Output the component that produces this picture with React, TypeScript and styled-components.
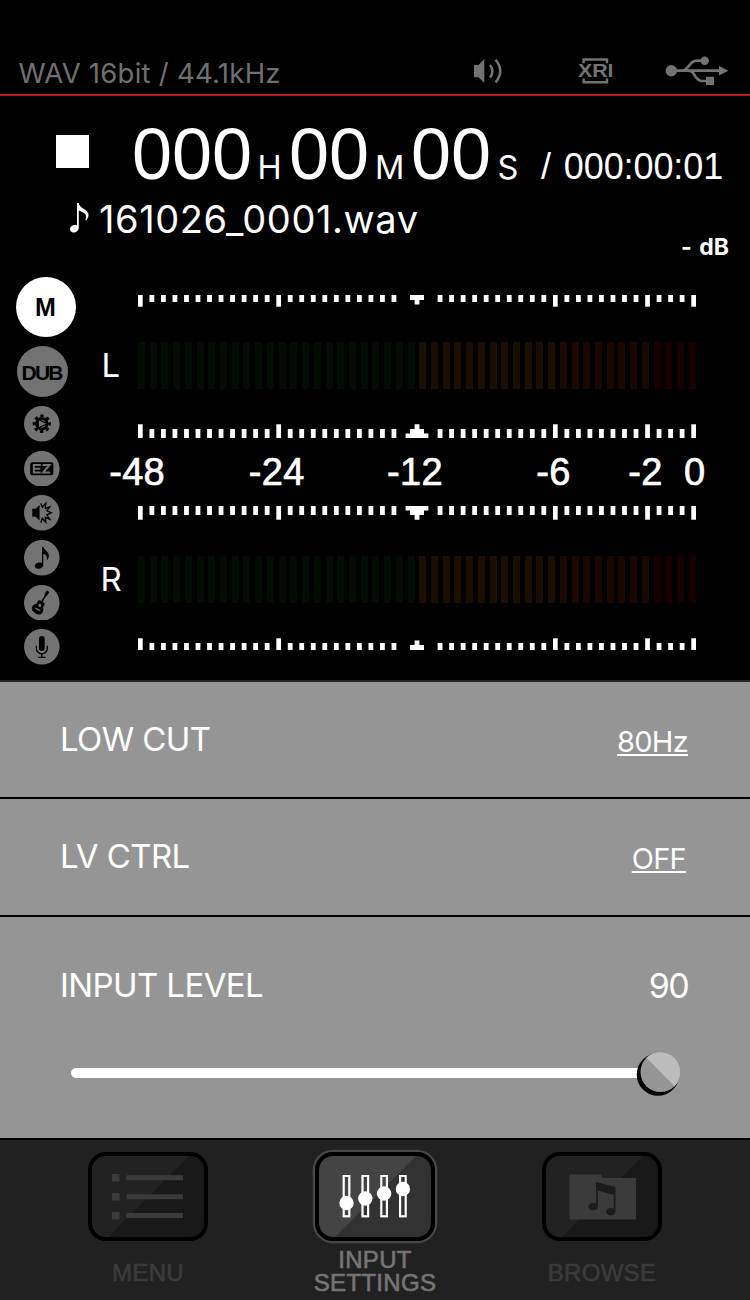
import React from "react";
import styled, { createGlobalStyle } from "styled-components";

const GlobalStyle = createGlobalStyle`
  * { box-sizing: border-box; }
  body { margin: 0; background: #000; }
`;

const system = `Inter, "Open Sans", sans-serif`;
const helvetica = `"Liberation Sans", Arial, sans-serif`;

const Screen = styled.main`
  width: 750px;
  height: 1300px;
  display: flex;
  flex-direction: column;
  overflow: hidden;
  background: #000;
  color: #fff;
  font-family: ${system};
`;

/* Status bar */
const StatusBar = styled.header`
  height: 96px;
  flex: none;
  display: flex;
  align-items: flex-end;
  border-bottom: 2px solid #b81c18;
  color: #707070;
`;
const Format = styled.div`
  width: 455px;
  padding: 0 0 4px 18.5px;
  font-size: 27.5px;
  line-height: 33px;
  font-weight: 400;
  letter-spacing: 0.25px;
  white-space: nowrap;
`;
const StatusIcon = styled.svg<{ $w: number; $h: number; $left: number; $bottom: number }>`
  flex: none;
  width: ${(p) => p.$w}px;
  height: ${(p) => p.$h}px;
  margin: 0 0 ${(p) => p.$bottom}px ${(p) => p.$left}px;
`;

/* Transport */
const Transport = styled.section`
  height: 174px;
  flex: none;
  display: flex;
  flex-direction: column;
`;
const TimeRow = styled.div`
  height: 102px;
  display: flex;
  align-items: baseline;
  padding-left: 56px;
  white-space: nowrap;
`;
const StopMark = styled.div`
  width: 33px;
  height: 33px;
  flex: none;
  align-self: flex-start;
  margin: 39px 43px 0 0;
  background: #fff;
`;
const Digits = styled.span<{ $width: number }>`
  width: ${(p) => p.$width}px;
  flex: none;
  font: 72px/104px ${helvetica};
  padding-top: 6px;
`;
const Unit = styled.span<{ $left: number; $width: number }>`
  flex: none;
  width: ${(p) => p.$width}px;
  padding-left: ${(p) => p.$left}px;
  font-size: 32.5px;
  font-weight: 400;
`;
const Total = styled.span`
  flex: none;
  font: 36px/40px ${helvetica};
  letter-spacing: -0.1px;
  word-spacing: 3px;
`;
const FileRow = styled.div`
  display: flex;
  align-items: center;
  height: 40px;
  padding-left: 69px;
`;
const FileName = styled.span`
  margin: 2px 0 0 9px;
  font-size: 38px;
  line-height: 46px;
  font-weight: 400;
  letter-spacing: 0.6px;
  white-space: nowrap;
`;
const Peak = styled.div`
  padding-right: 21px;
  margin-top: -5px;
  text-align: right;
  font-size: 23px;
  line-height: 28px;
  font-weight: 700;
  word-spacing: 2px;
`;

/* Meters */
const MeterArea = styled.section`
  height: 410px;
  flex: none;
  display: flex;
`;
const Effects = styled.nav`
  width: 94px;
  display: flex;
  flex-direction: column;
  align-items: center;
  padding: 7px 9.5px 0 0;
`;
const MasterBadge = styled.div`
  width: 60px;
  height: 60px;
  margin-left: 6.5px;
  border-radius: 50%;
  display: grid;
  place-items: center;
  background: #fff;
  color: #000;
  font: 700 25px/60px ${helvetica};
`;
const DubBadge = styled.div`
  width: 51.4px;
  height: 51.4px;
  margin-top: 8.7px;
  border-radius: 50%;
  display: grid;
  place-items: center;
  background: #737373;
  color: #000;
  font: 700 21px/53px ${helvetica};
  letter-spacing: -1.8px;
  text-indent: -1.2px;
`;
const EffectIcon = styled.svg`
  width: 35.6px;
  height: 35.6px;
  flex: none;
  margin-top: 9.02px;
`;
const Meters = styled.div`
  flex: 1;
  display: flex;
  flex-direction: column;
  padding-top: 25px;
`;
const Channel = styled.div<{ $gapTop: number; $gapBottom: number }>`
  display: flex;
  align-items: center;
  height: 47px;
  margin: ${(p) => p.$gapTop}px 0 ${(p) => p.$gapBottom}px;
`;
const ChannelName = styled.span<{ $left: number }>`
  width: 44px;
  padding-left: ${(p) => p.$left}px;
  font-size: 33px;
  line-height: 47px;
  font-weight: 400;
`;
const Bars = styled.div`
  width: 558px;
  height: 47px;
  display: flex;
  justify-content: space-between;
`;
const Bar = styled.i<{ $color: string }>`
  width: 7px;
  background: ${(p) => p.$color};
`;
const Ruler = styled.svg`
  display: block;
  width: 558px;
  height: 14px;
  margin-left: 44px;
  flex: none;
`;
const Scale = styled.div`
  position: relative;
  height: 68px;
`;
const ScaleValue = styled.span<{ $x: number }>`
  position: absolute;
  top: 12px;
  left: ${(p) => p.$x}px;
  font: 38px/44px ${helvetica};
  letter-spacing: 0.3px;
  -webkit-text-stroke: 0.7px #fff;
`;

/* Settings */
const Settings = styled.section`
  height: 460px;
  flex: none;
  display: flex;
  flex-direction: column;
  border-top: 2px solid #262626;
  border-bottom: 2px solid #000;
  background: #959595;
`;
const Row = styled.div<{ $height: number; $line?: boolean; $top: number }>`
  display: flex;
  justify-content: space-between;
  align-items: baseline;
  height: ${(p) => p.$height}px;
  padding: ${(p) => p.$top}px 62px 0 60px;
  border-bottom: ${(p) => (p.$line ? "2px solid #000" : "none")};
`;
const Label = styled.span`
  font-size: 33px;
  line-height: 42px;
  font-weight: 400;
  letter-spacing: -0.6px;
`;
const Choice = styled.span<{ $right?: number }>`
  position: relative;
  top: 1px;
  margin-right: ${(p) => p.$right ?? 0}px;
  font-size: 29px;
  font-weight: 400;
  letter-spacing: -0.7px;
  text-decoration: underline;
  text-decoration-thickness: 2px;
  text-underline-offset: 2px;
`;
const Level = styled.span`
  position: relative;
  top: 1px;
  font-size: 34px;
  font-weight: 400;
  letter-spacing: -1.6px;
`;
const SliderRow = styled.div`
  display: flex;
  align-items: center;
  height: 46px;
  margin-top: 21px;
  padding-left: 71px;
`;
const Track = styled.div`
  width: 575px;
  height: 10px;
  border-radius: 5px;
  background: #fff;
`;
const Knob = styled.svg`
  width: 46px;
  height: 46px;
  margin-left: -10px;
`;

/* Tabs */
const TabBar = styled.nav`
  flex: 1;
  display: grid;
  grid-template-columns: 245px 260px 245px;
  background: #212121;
`;
const Tab = styled.div<{ $inset?: string; $color: string }>`
  display: flex;
  flex-direction: column;
  align-items: center;
  padding: ${(p) => p.$inset ?? "12px 0 0"};
  color: ${(p) => p.$color};
`;
const Key = styled.div<{ $active?: boolean }>`
  width: 120px;
  height: 89px;
  flex: none;
  display: grid;
  place-items: center;
  border: 4.5px solid #000;
  border-radius: 18px;
  background: ${(p) =>
    p.$active
      ? "linear-gradient(135deg, #444 50%, #323232 50.5%)"
      : "linear-gradient(135deg, #222 50%, #191919 50.5%)"};
  background-clip: padding-box;
  box-shadow: ${(p) => (p.$active ? "0 0 0 2.3px #484848" : "none")};
`;
const TabLabel = styled.div<{ $top: number }>`
  margin-top: ${(p) => p.$top}px;
  font: 24px/23px ${helvetica};
  letter-spacing: 0.3px;
  -webkit-text-stroke: 0.6px currentColor;
  text-align: center;
`;

const STEP = 553.3 / 48;
const MAJOR = [0, 12, 36, 44, 48];

function Ticks({ up, tall }: { up?: boolean; tall?: boolean }) {
  const minor = tall ? 9 : 7;
  const major = tall ? 13.7 : 11.7;
  const centre = tall
    ? "M267.6 0h22.800v4.600h-4.400v4.400h-4.600v4.700h-4.800v-4.700h-4.600V4.600h-4.400z"
    : "M272 0h14v5h-4.600v4.500h-4.800V5H272z";
  const marks = [];
  for (let i = 0; i <= 48; i++) {
    if (i >= 23 && i <= 25) continue;
    const big = MAJOR.includes(i);
    const w = big ? 4.7 : 4.8;
    marks.push(<rect key={i} x={2.35 + i * STEP - w / 2} y={0} width={w} height={big ? major : minor} />);
  }
  return (
    <Ruler viewBox="0 0 558 14" fill="#fff">
      <g transform={up ? "matrix(1 0 0 -1 0 14)" : undefined}>
        {marks}
        <path d={centre} />
      </g>
    </Ruler>
  );
}

function barColor(i: number) {
  if (i < 24) return "#030d04";
  if (i < 36) return "#1a0f00";
  if (i < 44) return "#1b0800";
  return "#180000";
}

function LevelBars() {
  return (
    <Bars>
      {Array.from({ length: 48 }, (_, i) => (
        <Bar key={i} $color={barColor(i)} />
      ))}
    </Bars>
  );
}

const Disc = ({ children }: { children: React.ReactNode }) => (
  <EffectIcon viewBox="-17.8 -17.8 35.6 35.6">
    <circle r="17.8" fill="#737373" />
    {children}
  </EffectIcon>
);

export default function App() {
  return (
    <Screen>
      <GlobalStyle />
      <StatusBar>
        <Format>WAV 16bit / 44.1kHz</Format>
        <StatusIcon $w={29} $h={24} $left={19} $bottom={11} viewBox="0 0 29 24" fill="#737373">
          <path d="M0 6h4.500L10.300 0v24L4.500 18.300H0z" />
          <g fill="none" stroke="#737373" strokeWidth="2.5">
            <path d="M16 6q5 6.200 0 12.400" />
            <path d="M21.500 .8q9.500 11.200 0 22.600" />
          </g>
        </StatusIcon>
        <StatusIcon $w={36} $h={26} $left={75} $bottom={10} viewBox="0 0 36 26" fill="#737373">
          <path d="M5.600 5.300V1.500H29v3.800M5.600 20.500v3.800H29v-3.800" fill="none" stroke="#737373" strokeWidth="2.400" />
          <text
            x="0"
            y="19.200"
            fontFamily="Liberation Sans, sans-serif"
            fontWeight="700"
            fontSize="18.500"
            textLength="35.500"
            lengthAdjust="spacingAndGlyphs"
          >
            XRI
          </text>
        </StatusIcon>
        <StatusIcon $w={64} $h={30} $left={51} $bottom={8} viewBox="0 0 64 30" fill="#737373">
          <circle cx="6.3" cy="14.7" r="5.7" />
          <circle cx="39.7" cy="4.7" r="4.2" />
          <path d="M54 9.700l9.300 5-9.300 4.900zM41 20.700h8v8.300h-8z" />
          <path
            d="M6 14.700h49M16 14.700c4.500 0 5.500-2 8-5s4-5 8-5h6M24 14.700c4 0 4 2.500 6 5.300s4 5 7 5h6"
            fill="none"
            stroke="#737373"
            strokeWidth="2.7"
          />
        </StatusIcon>
      </StatusBar>

      <Transport>
        <TimeRow>
          <StopMark />
          <Digits $width={120}>000</Digits>
          <Unit $left={5.5} $width={37}>H</Unit>
          <Digits $width={80}>00</Digits>
          <Unit $left={6} $width={42}>M</Unit>
          <Digits $width={80}>00</Digits>
          <Unit $left={6.5} $width={50}>S</Unit>
          <Total>/ 000:00:01</Total>
        </TimeRow>
        <FileRow>
          <svg width="21" height="32" viewBox="0 0 21 32" fill="#fff">
            <path d="M8 1h1.800c.5 3.500 3 4.500 6 6.500 4.500 3 4.800 6.500 1.500 11l-1-.5c2-4 1-7-6.500-9.500V25c0 3.500-2.500 5.500-5.300 5.500C2.300 30.500 1 29 1 27.200c0-2.400 2.300-4.200 5-4.200.8 0 1.400.1 2 .4z" />
          </svg>
          <FileName>161026_0001.wav</FileName>
        </FileRow>
        <Peak>- dB</Peak>
      </Transport>

      <MeterArea>
        <Effects>
          <MasterBadge>M</MasterBadge>
          <DubBadge>DUB</DubBadge>
          <Disc>
            <circle r="7.600" fill="none" stroke="#000" strokeWidth="3.200" strokeDasharray="3.200 2.769" strokeDashoffset="1.600" />
            <circle r="5.300" fill="none" stroke="#000" strokeWidth="2.800" />
            <path d="M-3.500-4.300L5.500 0l-9 4.300z" fill="#737373" stroke="#000" strokeWidth="1.200" />
          </Disc>
          <Disc>
            <rect x="-11.600" y="-6.500" width="23.200" height="13" rx="2" />
            <path d="M-1-3.800h-7v7.600h7M-8 0h6.500M.8-3.800h7L1.200 3.800h7.200" fill="none" stroke="#737373" strokeWidth="2" />
          </Disc>
          <Disc>
            <path d="M-9.500-4h3.300l4-3.800v15.600l-4-3.800h-3.300z" />
            <path d="M-1-9.500l1.500 4 3.500-4-.5 5 4.500-1.500-3 4L9.500 0 5 2l3 4.500-4.500-2 .5 5L.5 5.500-1 10" fill="none" stroke="#000" strokeWidth="1.300" />
          </Disc>
          <Disc>
            <path d="M.2-11h1.300c.5 3 5.500 4.500 5.500 8.800 0 2-.7 3.700-2 5.200.8-4-.5-6-3.500-7V7C1.500 9.500-1 11-3.500 11S-7 9.700-7 8.300C-7 6-4.500 4.600-2 4.600c.8 0 1.600.1 2.200.4z" />
          </Disc>
          <Disc>
            <g transform="translate(-.5 0) rotate(30)">
              <rect x="-.8" y="-10" width="1.600" height="13" />
              <rect x="-1.500" y="-13.500" width="3" height="5" rx=".8" />
              <path d="M-2.500-1.500c-1.500.3-2 2.300-1 4.300-2 1.700-2.700 3.500-2.300 5.500C-5.300 11-3 12 0 12s5.300-1 5.800-3.700c.4-2-.3-3.800-2.300-5.500 1-2 .5-4-1-4.300z" />
              <circle cy="3" r="1.500" fill="#737373" />
              <path d="M-2.500 7.500h5" stroke="#737373" strokeWidth="1.400" />
            </g>
          </Disc>
          <Disc>
            <rect x="-2.900" y="-10.800" width="5.800" height="15" rx="2.900" />
            <path d="M-5.500-1v2.500a5.500 5.500 0 0 0 11 0V-1M0 7v3.300M-3.700 10.500h7.400" fill="none" stroke="#000" strokeWidth="1.300" />
          </Disc>
        </Effects>
        <Meters>
          <Ticks />
          <Channel $gapTop={33} $gapBottom={35}>
            <ChannelName $left={7.5}>L</ChannelName>
            <LevelBars />
          </Channel>
          <Ticks up tall />
          <Scale>
            <ScaleValue $x={15.2}>-48</ScaleValue>
            <ScaleValue $x={154.8}>-24</ScaleValue>
            <ScaleValue $x={293}>-12</ScaleValue>
            <ScaleValue $x={442.3}>-6</ScaleValue>
            <ScaleValue $x={534.3}>-2</ScaleValue>
            <ScaleValue $x={590}>0</ScaleValue>
          </Scale>
          <Ticks tall />
          <Channel $gapTop={36} $gapBottom={33}>
            <ChannelName $left={6.5}>R</ChannelName>
            <LevelBars />
          </Channel>
          <Ticks up />
        </Meters>
      </MeterArea>

      <Settings>
        <Row $height={117} $top={36} $line>
          <Label>LOW CUT</Label>
          <Choice>80Hz</Choice>
        </Row>
        <Row $height={118} $top={36} $line>
          <Label>LV CTRL</Label>
          <Choice $right={2}>OFF</Choice>
        </Row>
        <Row $height={112} $top={47}>
          <Label>INPUT LEVEL</Label>
          <Level>90</Level>
        </Row>
        <SliderRow>
          <Track />
          <Knob viewBox="0 0 46 46">
            <circle cx="22" cy="24.500" r="21.300" fill="#000" />
            <circle cx="24.500" cy="22" r="20" fill="#959595" />
            <path d="M10.360 7.860A20 20 0 0 1 38.640 36.140z" fill="#bcbcbc" />
          </Knob>
        </SliderRow>
      </Settings>

      <TabBar>
        <Tab $inset="12px 0 0 51px" $color="#3b3b3b">
          <Key>
            <svg width="72" height="46" viewBox="0 0 72 46" fill="#3b3b3b">
              <path d="M0 0h7.500v7.500H0zM0 19h7.500v7.500H0zM0 38h7.500v7.500H0zM14.500 1.300H71v5H14.500zM14.500 20.300H71v5H14.500zM14.500 39H71v5H14.500z" />
            </svg>
          </Key>
          <TabLabel $top={20}>MENU</TabLabel>
        </Tab>
        <Tab $color="#757575">
          <Key $active>
            <svg width="72" height="44" viewBox="0 0 72 44">
              {[28, 23.5, 18.5, 14].map((y, i) => (
                <g key={i} transform={`translate(${7.5 + i * 18.8} 0)`}>
                  <rect x="-2.800" y=".8" width="5.600" height="40.500" fill="none" stroke="#fff" strokeWidth="2.200" />
                  <circle cy={y} r="7.200" fill="#fff" />
                </g>
              ))}
            </svg>
          </Key>
          <TabLabel $top={7}>
            INPUT
            <br />
            SETTINGS
          </TabLabel>
        </Tab>
        <Tab $inset="12px 51px 0 0" $color="#3b3b3b">
          <Key>
            <svg width="68" height="46" viewBox="0 0 68 46">
              <path d="M1.500.500h31.500l1.500 3.500H68v41.500H1.500z" fill="#3b3b3b" />
              <path d="M28 8l19.500 5v25a4.800 3.800 0 1 1-1.800-3.300V21L29.800 16.500V33.500A4.800 3.800 0 1 1 28 29.500z" fill="#1c1c1c" />
            </svg>
          </Key>
          <TabLabel $top={20}>BROWSE</TabLabel>
        </Tab>
      </TabBar>
    </Screen>
  );
}
